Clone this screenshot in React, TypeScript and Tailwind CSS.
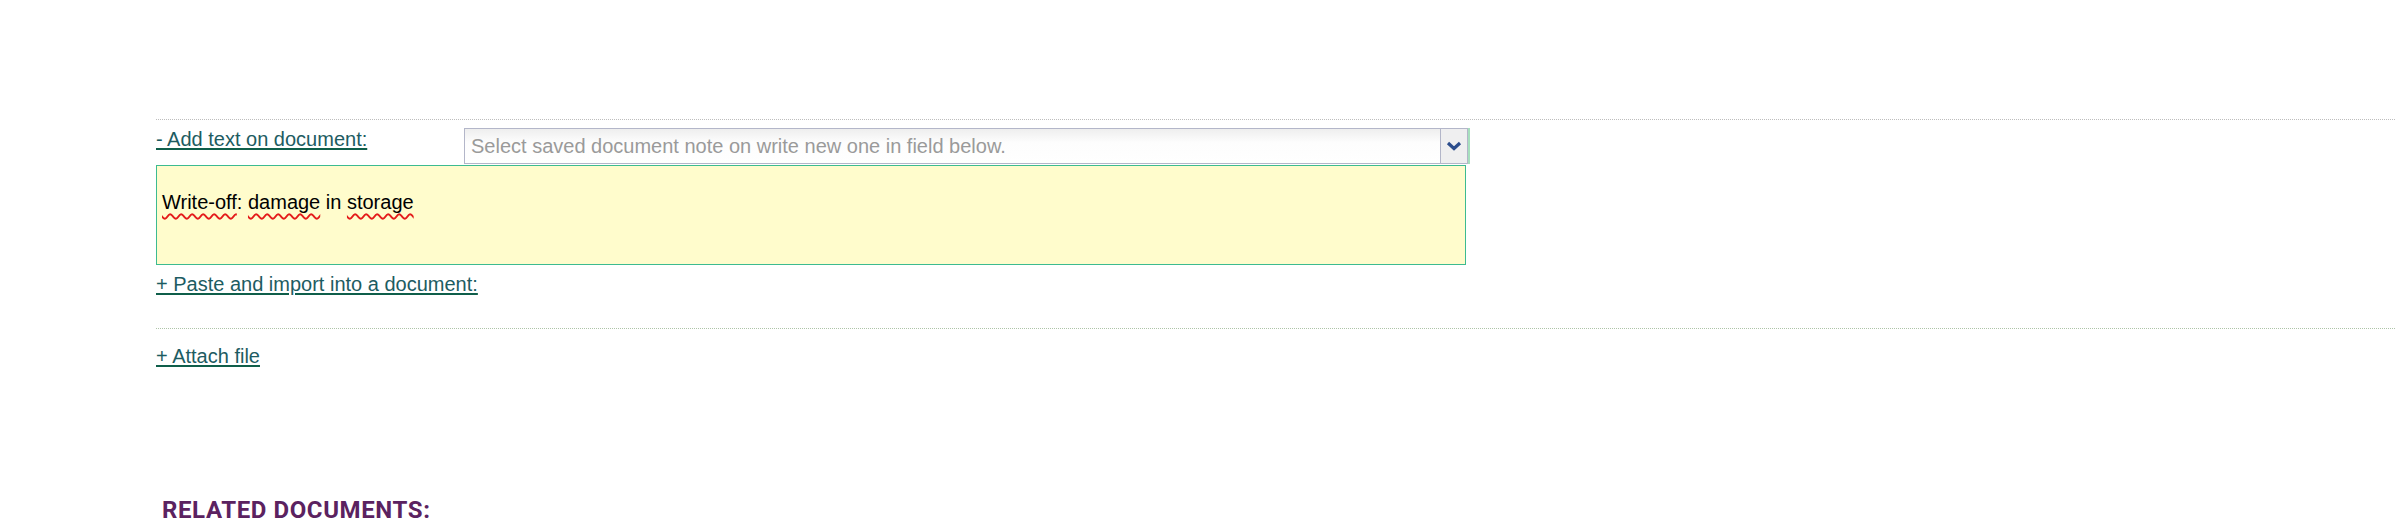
import React from "react";

const linkCls =
  "block w-fit text-[20px] leading-[22px] text-[#1d5c62] underline decoration-[#0f5e4a] decoration-2 underline-offset-[2px] cursor-pointer";

const squiggle =
  "underline decoration-wavy decoration-[#e41b1b] decoration-[1.5px] underline-offset-[4px]";

export default function App() {
  return (
    <div className="bg-white w-full h-[529px] overflow-hidden pt-[119px] pl-[156px] font-['Liberation_Sans',Arial,sans-serif]">
      <div className="border-t border-dotted border-[#bdbdbd] pt-[8px] pb-[33px]">
        <div className="flex items-start">
          <div className="w-[308px]">
            <a className={linkCls}>- Add text on document:</a>
          </div>
          <div className="flex w-[1004px] h-[36px] border border-[#b3b6c9] shadow-[2px_0_0_#a6dfbd] bg-[linear-gradient(to_bottom,#eeeeee_0%,#fdfdfd_40%,#ffffff_100%)]">
            <div className="flex-1 flex items-center pl-[6px] text-[20px] leading-[22px] text-[#9a9a9a] whitespace-nowrap overflow-hidden">
              Select saved document note on write new one in field below.
            </div>
            <div className="w-[27px] h-full border-l border-[#b3b6c9] bg-[#efeff0] flex items-center justify-center">
              <svg width="16" height="10" viewBox="0 0 16 10">
                <path d="M2 2 L8 7.5 L14 2" fill="none" stroke="#2c4d8c" strokeWidth="3.2" strokeLinejoin="miter" />
              </svg>
            </div>
          </div>
        </div>
        <div className="mt-[1px] w-[1310px] h-[100px] border border-[#3dbb90] bg-[#fffccc] pl-[5px] pt-[25px] text-[20px] leading-[22px] text-black">
          <span className={squiggle}>Write-off</span>
          : <span className={squiggle}>damage</span> in{" "}
          <span className={squiggle}>storage</span>
        </div>
        <div className="mt-[8px]">
          <a className={linkCls}>+ Paste and import into a document:</a>
        </div>
      </div>
      <div className="border-t border-dotted border-[#aec4a8] pt-[16px]">
        <a className={linkCls}>+ Attach file</a>
      </div>
      <div className="mt-[130px] pl-[6px] font-['Roboto',sans-serif] font-bold text-[24px] leading-[27px] tracking-[0.6px] text-[#5b2260]">
        RELATED DOCUMENTS:
      </div>
    </div>
  );
}
